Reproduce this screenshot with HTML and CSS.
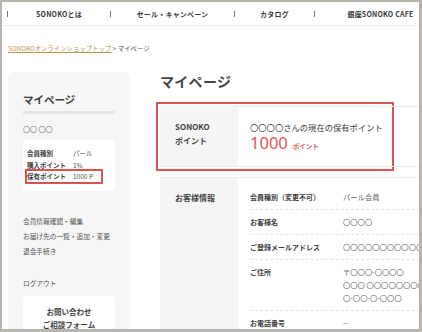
FILE: index.html
```html
<!DOCTYPE html>
<html lang="ja">
<head>
    <meta charset="UTF-8">
    <meta name="viewport" content="width=device-width, initial-scale=1.0">
    <title>マイページ | SONOKO</title>
    <link rel="stylesheet" href="styles.css">
</head>
<body>
    <div class="frame">
        <nav class="nav">
            <div class="nav-item item-about"><span>SONOKOとは</span></div>
            <div class="nav-item item-sale"><span>セール・キャンペーン</span></div>
            <div class="nav-item item-catalog"><span>カタログ</span></div>
            <div class="nav-item item-cafe"><span>銀座SONOKO CAFE</span></div>
        </nav>

        <div class="breadcrumb">
            <a href="#">SONOKOオンラインショップトップ</a> &gt; マイページ
        </div>

        <div class="page">
            <aside class="sidebar">
                <h2 class="side-title">マイページ</h2>
                <div class="side-name">〇〇 〇〇</div>
                <div class="side-status">
                    <div class="status-row"><span class="status-label">会員種別</span><span class="status-value">パール</span></div>
                    <div class="status-row"><span class="status-label">購入ポイント</span><span class="status-value">1%</span></div>
                    <div class="status-row marked"><span class="status-label">保有ポイント</span><span class="status-value">1000 P</span></div>
                </div>
                <ul class="side-links">
                    <li><a href="#">会員情報確認・編集</a></li>
                    <li><a href="#">お届け先の一覧・追加・変更</a></li>
                    <li><a href="#">退会手続き</a></li>
                </ul>
                <div class="side-logout"><a href="#">ログアウト</a></div>
                <div class="side-contact">
                    <p>お問い合わせ</p>
                    <p>ご相談フォーム</p>
                </div>
            </aside>

            <main class="main">
                <h1 class="main-title">マイページ</h1>

                <div class="highlight">
                    <div class="info-table">
                        <div class="info-head">SONOKO<br>ポイント</div>
                        <div class="info-body points">
                            <p class="points-text">〇〇〇〇さんの現在の保有ポイント</p>
                            <p class="points-num">1000<span>ポイント</span></p>
                        </div>
                    </div>
                </div>

                <div class="info-table customer">
                    <div class="info-head">お客様情報</div>
                    <div class="info-body">
                        <div class="field">
                            <div class="field-label">会員種別（変更不可）</div>
                            <div class="field-value">パール会員</div>
                        </div>
                        <div class="field">
                            <div class="field-label">お客様名</div>
                            <div class="field-value">〇〇〇〇</div>
                        </div>
                        <div class="field">
                            <div class="field-label">ご登録メールアドレス</div>
                            <div class="field-value">〇〇〇〇〇〇〇〇〇〇〇〇〇〇〇〇</div>
                        </div>
                        <div class="field">
                            <div class="field-label">ご住所</div>
                            <div class="field-value">〒〇〇〇-〇〇〇〇<br>〇〇〇 〇〇〇〇〇〇〇〇〇〇〇〇<br>〇-〇〇-〇-〇〇〇</div>
                        </div>
                        <div class="field">
                            <div class="field-label">お電話番号</div>
                            <div class="field-value">--</div>
                        </div>
                    </div>
                </div>
            </main>
        </div>
    </div>
</body>
</html>
```

FILE: styles.css
```css
*{
    margin:0;
    padding:0;
    box-sizing:border-box;
}
body{
    font-family:"Noto Sans CJK JP", "Noto Sans", sans-serif;
    color:#444;
    background:#fff;
}
a{
    color:inherit;
    text-decoration:none;
}
ul{
    list-style:none;
}
.frame{
    width:422px;
    height:332px;
    border-style:solid;
    border-color:#bab4ae;
    border-width:2px 3px 3px 2px;
    overflow:hidden;
    background:#fff;
}

/* header nav */
.nav{
    display:flex;
    height:24px;
    padding-left:5px;
    border-bottom:1px solid #ededed;
    white-space:nowrap;
}
.nav-item{
    display:flex;
    align-items:center;
    flex-shrink:0;
}
.nav-item::before{
    content:"";
    width:1px;
    height:6px;
    background:#777;
}
.nav-item span{
    flex:1;
    text-align:center;
    font-size:7px;
    font-weight:bold;
    letter-spacing:0.2px;
    color:#3a3a3a;
}
.item-about{ width:103px; }
.item-sale{ width:124px; }
.item-catalog{ width:80px; }
.item-cafe{ width:132px; }

.breadcrumb{
    margin-top:18px;
    padding-left:6px;
    font-size:6.4px;
    line-height:10px;
    color:#555;
    white-space:nowrap;
}
.breadcrumb a{
    color:#c0924f;
    text-decoration:underline;
}

.page{
    display:flex;
    gap:30px;
    margin-top:18px;
    padding-left:6px;
}

/* sidebar */
.sidebar{
    flex-shrink:0;
    width:122px;
    height:400px;
    padding:21px 15px 0;
    background:#f6f6f6;
    border-radius:5px 5px 0 0;
}
.side-title{
    font-size:10.5px;
    line-height:14px;
    padding-bottom:4px;
    border-bottom:3px solid #e4e4e4;
    color:#3d3d3d;
}
.side-name{
    margin-top:10px;
    font-size:7px;
    line-height:10px;
    color:#777;
}
.side-status{
    margin-top:6px;
    padding:7px 0 7px 4px;
    background:#fff;
    border-radius:3px;
}
.status-row{
    display:flex;
    font-size:6.5px;
    line-height:12px;
    white-space:nowrap;
}
.status-label{
    width:46px;
    font-weight:bold;
    color:#3d3d3d;
}
.status-value{
    color:#555;
}
.status-row.marked{
    width:78px;
    margin:-2px 0 0 -2px;
    line-height:11px;
    border:2px solid #d9534f;
}
.side-links{
    margin-top:23px;
    font-size:6.7px;
    line-height:15px;
    color:#555;
    white-space:nowrap;
}
.side-logout{
    margin-top:17px;
    font-size:6.7px;
    line-height:15px;
    color:#555;
}
.side-contact{
    margin-top:5px;
    padding-top:9px;
    height:60px;
    background:#fff;
    border-radius:3px;
    text-align:center;
    font-size:7.5px;
    font-weight:bold;
    line-height:13px;
    color:#3d3d3d;
}

/* main */
.main{
    flex-shrink:0;
    width:300px;
}
.main-title{
    margin-top:-1px;
    font-size:14px;
    line-height:20px;
    letter-spacing:0.3px;
    color:#444;
}
.highlight{
    width:238px;
    margin:11px 0 0 -4px;
    padding:2px;
    border:2px solid #d9534f;
}
.info-table{
    display:flex;
    width:300px;
    border-top:1px solid #ebebeb;
    border-bottom:1px solid #ebebeb;
}
.info-head{
    flex-shrink:0;
    width:78px;
    padding:13px 0 0 15px;
    background:#f5f5f5;
    font-size:8px;
    font-weight:bold;
    line-height:14px;
    color:#444;
}
.info-body{
    flex:1;
    padding-left:12px;
}
.points{
    height:59px;
    padding-top:14px;
}
.points-text{
    font-size:8.3px;
    line-height:12px;
    color:#3d3d3d;
    white-space:nowrap;
}
.points-num{
    font-size:16.5px;
    line-height:20px;
    color:#e05555;
    font-family:"Noto Sans", sans-serif;
}
.points-num span{
    margin-left:5px;
    font-family:"Noto Sans CJK JP", sans-serif;
    font-size:6.5px;
    font-weight:bold;
}

.customer{
    margin-top:6px;
    border-bottom:none;
}
.customer .info-head{
    padding-top:13px;
    line-height:13px;
}
.customer .info-body{
    padding-top:7px;
}
.field{
    display:flex;
    padding:6px 0 5px;
    border-bottom:1px dashed #e3e3e3;
    white-space:nowrap;
}
.field-label{
    flex-shrink:0;
    width:93px;
    font-size:7px;
    font-weight:bold;
    line-height:13px;
    color:#3d3d3d;
}
.field-value{
    font-size:7.3px;
    line-height:13px;
    color:#666;
}
```
